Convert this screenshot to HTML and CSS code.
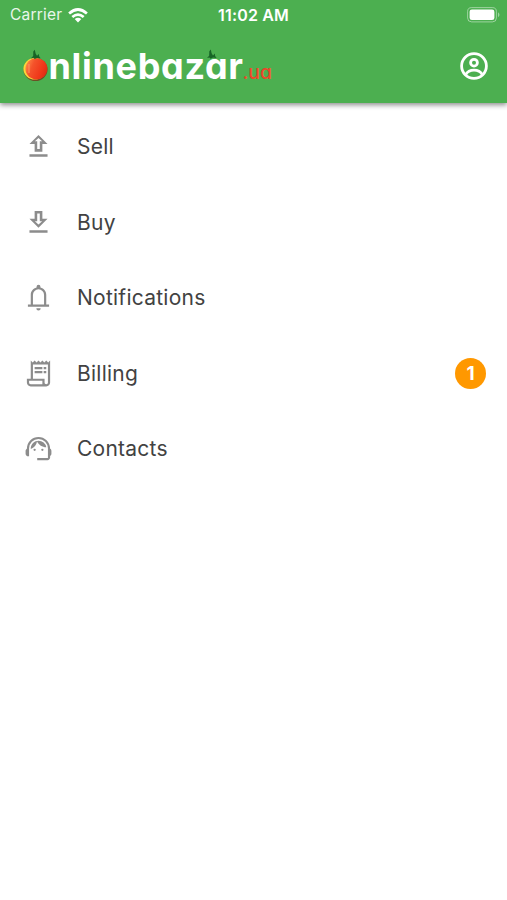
FILE: index.html
```html
<!DOCTYPE html>
<html lang="en">
<head>
<meta charset="utf-8">
<title>Onlinebazar.ua</title>
<link rel="stylesheet" href="styles.css">
</head>
<body>
<header class="header">
  <div class="status">
    <div class="carrier"><span>Carrier</span>
      <svg class="wifi" viewBox="0 0 20 15"><g fill="none" stroke="#fff" stroke-width="2.7"><path d="M1.1 5.4Q10-2.4 18.9 5.4"/><path d="M4.3 9Q10 4.1 15.7 9"/></g><path fill="#fff" d="M6.7 11.1Q10 8.5 13.3 11.1L10 14.5Z"/></svg>
    </div>
    <div class="time">11:02 AM</div>
    <svg class="battery" viewBox="0 0 34 16"><rect x=".6" y=".6" width="28.8" height="14.3" rx="4" fill="none" stroke="#fff" stroke-opacity=".45"/><rect x="2.6" y="2.5" width="24.8" height="10.6" rx="2.3" fill="#fff"/><path d="M31 5.3q3 2.5 0 5z" fill="#fff" fill-opacity=".45"/></svg>
  </div>
  <div class="bar">
    <svg class="logo" viewBox="0 -10 256 60" role="img" aria-label="Onlinebazar.ua">
      <defs><linearGradient id="fruit" x1="0" x2="1" y1=".3" y2=".7"><stop offset="0" stop-color="#ff8a45"/><stop offset=".3" stop-color="#f4532b"/><stop offset=".75" stop-color="#ef3518"/><stop offset="1" stop-color="#d92c12"/></linearGradient></defs>
      <ellipse cx="14.5" cy="23.5" rx="12" ry="11.5" fill="#6b5125"/>
      <ellipse cx="13.7" cy="22.8" rx="11.3" ry="10.8" fill="#f7d83b"/>
      <ellipse cx="15.4" cy="22.8" rx="11" ry="10.6" fill="url(#fruit)"/>
      <path d="M8 18v9" stroke="#ffab80" stroke-width="1.5" opacity=".45"/>
      <path id="leaf" d="M10 12.300l2.200-2.300.1-4.500 1.500-1.700.8 3.700 1.400 2.200 1.900-1.800.2 2.300 1.500 2.100-3.600-.4-2.300 1.100-1.300-1.200z" fill="#176426"/>
      <text class="name" x="27.500" y="33.400" textLength="194.500" lengthAdjust="spacing">nlinebazar</text>
      <use href="#leaf" x="176" y="-.3"/>
      <text class="domain" x="221.500" y="33.400" textLength="29.500" lengthAdjust="spacingAndGlyphs">.ua</text>
    </svg>
    <svg class="account" viewBox="0 0 28 28" fill="none" stroke="#fff" stroke-width="2.8"><circle cx="14" cy="14" r="12.400"/><circle cx="14" cy="10.700" r="3.400"/><path d="M5.700 22.600C9 16.700 19 16.700 22.300 22.600"/></svg>
  </div>
</header>
<nav class="menu">
  <a class="item"><svg class="icon" viewBox="0 0 24 24"><path d="M5 20h14v-2H5zm0-10h4v6h6v-6h4l-7-7zm8-2v6h-2V8H9.200L12 5.400 14.800 8z"/></svg><span>Sell</span></a>
  <a class="item"><svg class="icon" viewBox="0 0 24 24"><path d="M19 9h-4V3H9v6H5l7 7zm-8 2V5h2v6h1.800L12 13.600 9.200 11zm-6 7h14v2H5z"/></svg><span>Buy</span></a>
  <a class="item"><svg class="icon" viewBox="0 0 24 24"><path d="M10.300 20.300h3.400a1.700 1.700 0 0 1-3.400 0M3.800 17.500H6V10c0-2.800 1.800-5 4.500-5.700V3.600a1.500 1.500 0 0 1 3 0v.7C16.200 5 18 7.200 18 10v7.500h2.200v1.700H3.800zm3.900 0h8.600V10a4.300 4.300 0 0 0-8.600 0z"/></svg><span>Notifications</span></a>
  <a class="item"><svg class="icon" viewBox="0 0 24 24"><path d="M19.500 3.500 18 2l-1.500 1.500L15 2l-1.500 1.500L12 2l-1.500 1.500L9 2 7.500 3.500 6 2v14H3v3c0 1.660 1.340 3 3 3h12c1.660 0 3-1.340 3-3V2zM15 20.300H6c-.8 0-1.300-.5-1.300-1.300v-1.300H15zm4.300-1.300c0 .8-.5 1.300-1.300 1.300s-1.300-.5-1.300-1.300v-3h-9V5h11.600z"/><path d="M9 7h6v1.800H9zM16 7h2v1.800h-2zM9 10h6v1.800H9zM16 10h2v1.800h-2z"/></svg><span>Billing</span><b class="badge">1</b></a>
  <a class="item"><svg class="icon" viewBox="0 0 24 24"><path d="M21 12.220C21 6.730 16.740 3 12 3c-4.690 0-9 3.650-9 9.280-.6.340-1 .980-1 1.720v2c0 1.100.9 2 2 2h.7v-6.100a7.300 7.300 0 0 1 14.600 0v7.400H11V21h8c1.100 0 2-.9 2-2v-1.220c.59-.31 1-.92 1-1.640v-2.300c0-.7-.41-1.310-1-1.620z"/><circle cx="9" cy="13" r=".9"/><circle cx="15" cy="13" r=".9"/><path d="M18 11.030A6.040 6.040 0 0 0 12.050 6c-3.030 0-6.290 2.510-6.030 6.450a8.075 8.075 0 0 0 4.860-5.890c1.310 2.630 4 4.440 7.120 4.470z"/></svg><span>Contacts</span></a>
</nav>
</body>
</html>
```
FILE: styles.css
```css
* { box-sizing: border-box; }
body {
  margin: 0;
  min-height: 100vh;
  background: #fff;
  font-family: Inter, "Liberation Sans", sans-serif;
}
.header {
  height: 103px;
  background: #4caf50;
  color: #fff;
  box-shadow: 0 2px 5px rgba(0, 0, 0, .45);
}
.status {
  display: grid;
  grid-template-columns: 1fr auto 1fr;
  align-items: center;
  height: 30px;
  padding: 0 6px 0 10px;
  font-size: 16px;
  line-height: 30px;
}
.carrier { display: flex; align-items: center; gap: 6px; font-size: 15.5px; letter-spacing: .2px; color: #e9f6ea; }
.wifi { width: 20px; height: 15px; }
.time { margin-right: 4px; font-weight: 600; letter-spacing: .15px; }
.battery { width: 34px; height: 16px; justify-self: end; }
.bar {
  display: flex;
  align-items: center;
  justify-content: space-between;
  height: 72px;
  padding: 0 19px 0 21px;
}
.logo { width: 256px; height: 60px; }
.name {
  font: 650 36px Inter, sans-serif;
  font-feature-settings: "cv11" 1;
  fill: #fff;
}
.domain {
  font: 500 20px Inter, sans-serif;
  font-feature-settings: "cv11" 1;
  fill: #ef4529;
}
.account { width: 28px; height: 28px; }
.menu { padding-top: 6px; }
.item {
  display: flex;
  align-items: center;
  height: 75.5px;
  padding: 0 21px 0 23px;
  color: #424242;
  font-size: 21px;
  letter-spacing: .25px;
}
.icon { width: 31px; height: 31px; margin-right: 23px; fill: #8c8c8c; }
.badge {
  display: grid;
  place-items: center;
  width: 31px;
  height: 31px;
  margin-left: auto;
  border-radius: 50%;
  background: #ff9800;
  color: #fff;
  font-size: 19px;
  letter-spacing: 0;
}
```
